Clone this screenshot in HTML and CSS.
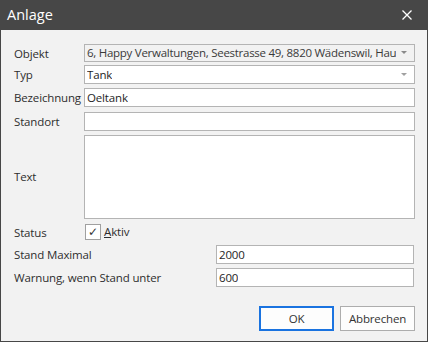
FILE: index.html
```html
<!DOCTYPE html>
<html lang="de">
<head>
<meta charset="utf-8">
<title>Anlage</title>
<link rel="stylesheet" href="styles.css">
</head>
<body>
<div class="window">
  <div class="titlebar">
    <span class="title">Anlage</span>
    <svg class="close" width="10" height="10" viewBox="0 0 10 10"><path d="M0.5 0.5 L9.5 9.5 M9.5 0.5 L0.5 9.5" stroke="#ffffff" stroke-width="1.3" fill="none"/></svg>
  </div>
  <div class="content">
    <div class="form">
      <div class="row r1">
        <span class="label">Objekt</span>
        <div class="field combo disabled"><span class="val">6, Happy Verwaltungen, Seestrasse 49, 8820 Wädenswil, Hau</span><span class="arrow dark"></span></div>
      </div>
      <div class="row r2">
        <span class="label">Typ</span>
        <div class="field combo"><span class="val">Tank</span><span class="arrow"></span></div>
      </div>
      <div class="row r3">
        <span class="label">Bezeichnung</span>
        <div class="field"><span class="val">Oeltank</span></div>
      </div>
      <div class="row r4">
        <span class="label">Standort</span>
        <div class="field"></div>
      </div>
      <div class="row r5">
        <span class="label">Text</span>
        <div class="field area"></div>
      </div>
      <div class="row r6">
        <span class="label">Status</span>
        <div class="check"><span class="box">✓</span><span class="cbl"><u>A</u>ktiv</span></div>
      </div>
      <div class="row wide r7">
        <span class="label">Stand Maximal</span>
        <div class="field"><span class="val">2000</span></div>
      </div>
      <div class="row wide r8">
        <span class="label">Warnung, wenn Stand unter</span>
        <div class="field"><span class="val">600</span></div>
      </div>
    </div>
    <div class="buttons">
      <button class="btn default">OK</button>
      <button class="btn">Abbrechen</button>
    </div>
  </div>
</div>
</body>
</html>
```

FILE: styles.css
```css
html, body {
  margin: 0;
  padding: 0;
}
body {
  font-family: "Open Sans", "Noto Sans", sans-serif;
  font-size: 11.5px;
  letter-spacing: -0.15px;
  color: #2e2e2e;
}
.window {
  width: 428px;
  height: 342px;
  box-sizing: border-box;
  border: 1px solid #474747;
  border-top: none;
  background: #f2f2f2;
  display: flex;
  flex-direction: column;
}
.titlebar {
  height: 30px;
  background: #474747;
  display: flex;
  align-items: center;
  justify-content: space-between;
  padding: 0 15px 0 6px;
  flex: none;
}
.title {
  color: #ffffff;
  font-size: 14.5px;
  letter-spacing: 0;
  margin-top: -1px;
}
.close {
  display: block;
}
.content {
  flex: 1;
  display: flex;
  flex-direction: column;
  padding: 14px 12px 10px 12px;
}
.form {
  display: flex;
  flex-direction: column;
}
.row {
  display: grid;
  grid-template-columns: 71px 1fr;
  align-items: start;
}
.row.wide {
  grid-template-columns: 203px 1fr;
  padding-right: 1px;
}
.r1 { height: 21px; }
.r2 { height: 23px; }
.r3 { height: 24px; }
.r4 { height: 23px; }
.r5 { height: 89px; }
.r6 { height: 21px; }
.r7 { height: 23px; }
.r8 { height: 19px; }
.r1 .label, .r2 .label, .r3 .label, .r4 .label, .r7 .label, .r8 .label { margin-top: 1px; }
.r5 .label { margin-top: 33px; }
.label {
  padding-left: 1px;
  line-height: 17px;
  white-space: nowrap;
}
.field {
  height: 19px;
  min-width: 0;
  box-sizing: border-box;
  border: 1px solid #b4b4b4;
  background: #ffffff;
  display: flex;
  align-items: center;
  padding-left: 2px;
  color: #1e1e1e;
  position: relative;
  overflow: hidden;
  white-space: nowrap;
}
.field.disabled {
  background: #f2f2f2;
  height: 18px;
  color: #3a3a3a;
}
.field.disabled .val {
  letter-spacing: -0.27px;
}
.field.area {
  height: 84px;
}
.val {
  line-height: 16px;
  min-width: 0;
  overflow: hidden;
}
.combo {
  padding-right: 16px;
}
.arrow {
  position: absolute;
  right: 7px;
  top: 7px;
  width: 0;
  height: 0;
  border-left: 3.5px solid transparent;
  border-right: 3.5px solid transparent;
  border-top: 3.5px solid #a0a0a0;
}
.arrow.dark {
  border-top-color: #8a8a8a;
  top: 6px;
}
.check {
  display: flex;
  align-items: center;
  gap: 3px;
  margin-left: 1px;
}
.box {
  width: 16px;
  height: 16px;
  box-sizing: border-box;
  border: 1px solid #a0a0a0;
  background: #ffffff;
  display: flex;
  align-items: center;
  justify-content: center;
  font-family: "DejaVu Sans", sans-serif;
  font-size: 12px;
  letter-spacing: 0;
  color: #333333;
  line-height: 1;
}
.cbl {
  line-height: 16px;
}
.buttons {
  margin-top: auto;
  display: flex;
  justify-content: flex-end;
  gap: 6px;
}
.btn {
  width: 75px;
  height: 25px;
  box-sizing: border-box;
  border: 1px solid #adadad;
  background: #fdfdfd;
  font-family: "Open Sans", "Noto Sans", sans-serif;
  font-size: 11.5px;
  letter-spacing: -0.15px;
  color: #333333;
  padding: 0;
}
.btn.default {
  border: 1px solid #1a73e0;
  box-shadow: inset 0 0 0 1px #1a73e0;
}
```
